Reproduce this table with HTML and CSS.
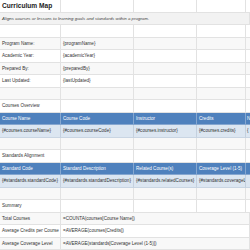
FILE: index.html
```html
<!DOCTYPE html>
<html>
<head>
<meta charset="utf-8">
<link rel="stylesheet" href="styles.css">
</head>
<body>
<div class="sheet">
  <div class="c title">Curriculum Map</div><div class="c"></div><div class="c"></div><div class="c"></div><div class="c"></div>
  <div class="c sub span-all">Aligns courses or lessons to learning goals and standards within a program.</div>
  <div class="c"></div><div class="c"></div><div class="c"></div><div class="c"></div><div class="c"></div>

  <div class="c band">Program Name:</div><div class="c band">{programName}</div><div class="c band"></div><div class="c band"></div><div class="c band"></div>
  <div class="c">Academic Year:</div><div class="c">{academicYear}</div><div class="c"></div><div class="c"></div><div class="c"></div>
  <div class="c band">Prepared By:</div><div class="c band">{preparedBy}</div><div class="c band"></div><div class="c band"></div><div class="c band"></div>
  <div class="c">Last Updated:</div><div class="c">{lastUpdated}</div><div class="c"></div><div class="c"></div><div class="c"></div>
  <div class="c band"></div><div class="c band"></div><div class="c band"></div><div class="c band"></div><div class="c band"></div>

  <div class="c">Courses Overview</div><div class="c"></div><div class="c"></div><div class="c"></div><div class="c"></div>
  <div class="c hd">Course Name</div><div class="c hd">Course Code</div><div class="c hd">Instructor</div><div class="c hd">Credits</div><div class="c hd edge">N</div>
  <div class="c dt">{#courses.courseName}</div><div class="c dt">{#courses.courseCode}</div><div class="c dt">{#courses.instructor}</div><div class="c dt">{#courses.credits}</div><div class="c dt edge">{</div>
  <div class="c band"></div><div class="c band"></div><div class="c band"></div><div class="c band"></div><div class="c band"></div>

  <div class="c">Standards Alignment</div><div class="c"></div><div class="c"></div><div class="c"></div><div class="c"></div>
  <div class="c hd">Standard Code</div><div class="c hd">Standard Description</div><div class="c hd">Related Course(s)</div><div class="c hd">Coverage Level (1-5)</div><div class="c hd edge"></div>
  <div class="c dt">{#standards.standardCode}</div><div class="c dt">{#standards.standardDescription}</div><div class="c dt">{#standards.relatedCourses}</div><div class="c dt">{#standards.coverageLevel}</div><div class="c dt edge"></div>
  <div class="c band"></div><div class="c band"></div><div class="c band"></div><div class="c band"></div><div class="c band"></div>

  <div class="c">Summary</div><div class="c"></div><div class="c"></div><div class="c"></div><div class="c"></div>
  <div class="c band">Total Courses</div><div class="c band span-rest">=COUNTA(courses[Course Name])</div>
  <div class="c">Average Credits per Course</div><div class="c span-rest">=AVERAGE(courses[Credits])</div>
  <div class="c band">Average Coverage Level</div><div class="c band span-rest">=AVERAGE(standards[Coverage Level (1-5)])</div>
</div>
</body>
</html>
```
FILE: styles.css
```css
html, body {
  margin: 0;
  padding: 0;
  background: #ffffff;
}
body {
  font-family: "Liberation Sans", Arial, sans-serif;
  width: 250px;
  height: 250px;
  overflow: hidden;
}
.sheet {
  display: grid;
  grid-template-columns: 61px 73px 63px 49px 4px;
  grid-template-rows: repeat(20, 12.5px);
  width: 250px;
}
.c {
  box-sizing: border-box;
  border-right: 1px solid #e2e2e2;
  border-bottom: 1px solid #e2e2e2;
  font-size: 4.6px;
  color: #333333;
  padding: 0 2px;
  display: flex;
  align-items: center;
  white-space: nowrap;
  overflow: hidden;
  background: #ffffff;
}
.edge {
  padding: 0 0 0 1px;
  border-right: none;
}
.title {
  font-size: 6.6px;
  font-weight: bold;
  color: #222222;
  overflow: visible;
}
.sub {
  background: #f2f2f2;
  font-style: italic;
  font-size: 4.4px;
  color: #444444;
}
.span-all {
  grid-column: 1 / -1;
}
.span-rest {
  grid-column: 2 / -1;
}
.band {
  background: #f8f8f8;
}
.hd {
  background: #4f81bd;
  color: #ffffff;
  border-right-color: #86a7d0;
  border-bottom-color: #86a7d0;
}
.dt {
  background: #dce6f1;
  border-right-color: #c4d0de;
  border-bottom-color: #c9d5e3;
}
```
